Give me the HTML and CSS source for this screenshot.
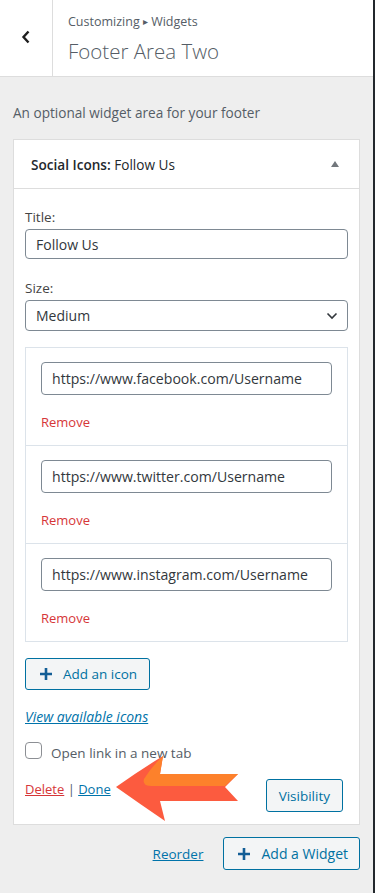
FILE: index.html
```html
<!doctype html>
<html lang="en">
<head>
	<meta charset="UTF-8">
	<title>Footer Area Two</title>
	<link rel="stylesheet" href="styles.css">
</head>
<body>
	<div class="panel">
		<div class="head">
			<button class="back" type="button" aria-label="Back">
				<svg width="10" height="14" viewBox="0 0 10 14"><path d="M7.5 1.5 L2.5 7 L7.5 12.5" fill="none" stroke="#1e1e1e" stroke-width="2.4"/></svg>
			</button>
			<div class="head-title">
				<span class="crumb">Customizing <span class="sep">&#9656;</span> Widgets</span>
				<h2>Footer Area Two</h2>
			</div>
		</div>

		<div class="body">
			<p class="desc">An optional widget area for your footer</p>

			<div class="widget">
				<div class="widget-top">
					<h3><strong>Social Icons:</strong> Follow Us</h3>
					<svg class="toggle" width="10" height="8" viewBox="0 0 10 8"><path d="M5 1 L9 7 L1 7 Z" fill="#72777c"/></svg>
				</div>
				<div class="widget-inside">
					<label class="lbl">Title:</label>
					<div class="field">Follow Us</div>

					<label class="lbl">Size:</label>
					<div class="field select">
						Medium
						<svg width="12" height="8" viewBox="0 0 12 8"><path d="M1.5 1.5 L6 6 L10.5 1.5" fill="none" stroke="#32373c" stroke-width="1.6"/></svg>
					</div>

					<ul class="icons">
						<li class="icon-item">
							<div class="field url">https://www.facebook.com/Username</div>
							<a class="remove" href="#">Remove</a>
						</li>
						<li class="icon-item">
							<div class="field url">https://www.twitter.com/Username</div>
							<a class="remove" href="#">Remove</a>
						</li>
						<li class="icon-item">
							<div class="field url">https://www.instagram.com/Username</div>
							<a class="remove" href="#">Remove</a>
						</li>
					</ul>

					<button class="btn" type="button">
						<svg width="12" height="12" viewBox="0 0 12 12"><path d="M6 0 V12 M0 6 H12" stroke="#135e96" stroke-width="2.6"/></svg>
						Add an icon
					</button>

					<a class="view-icons" href="#">View available icons</a>

					<label class="check">
						<span class="box"></span>
						Open link in a new tab
					</label>

					<div class="widget-control">
						<div class="links">
							<a class="delete" href="#">Delete</a> | <a class="done" href="#">Done</a>
						</div>
						<button class="btn small" type="button">Visibility</button>
					</div>
				</div>
			</div>

			<div class="area-actions">
				<a class="reorder" href="#">Reorder</a>
				<button class="btn" type="button">
					<svg width="12" height="12" viewBox="0 0 12 12"><path d="M6 0 V12 M0 6 H12" stroke="#135e96" stroke-width="2.6"/></svg>
					Add a Widget
				</button>
			</div>
		</div>

		<svg class="arrow" width="135" height="80" viewBox="0 0 135 80">
			<path d="M6 37 Q30 20 53 6 L50 24 L128 24 L115 37 L128 51 L50 51 L55 71 Q30 54 6 37 Z" fill="#fc5b3f"/>
			<path d="M53 6 L50 24 L128 24 L115 36 L42 36 Q32 36 34 29 Q42 16 53 6 Z" fill="#fd812b"/>
		</svg>
	</div>
</body>
</html>
```

FILE: styles.css
```css
body {
	margin: 0;
	padding: 0;
	font-family: "Open Sans", "Noto Sans", sans-serif;
	font-size: 13px;
	color: #555d66;
}
.panel {
	position: relative;
	width: 373px;
	min-height: 893px;
	background: #eeeeee;
	border-right: 2px solid #23282d;
}
.head {
	display: flex;
	height: 76px;
	background: #fff;
	border-bottom: 1px solid #dddddd;
}
.back {
	width: 53px;
	border: 0;
	border-right: 1px solid #dddddd;
	background: #fff;
	display: flex;
	align-items: center;
	justify-content: center;
	padding: 0 0 2px;
}
.head-title {
	padding: 11px 0 0 15px;
}
.crumb {
	display: block;
	line-height: 22px;
	font-size: 12.5px;
}
.crumb .sep {
	font-size: 10px;
	position: relative;
	top: -1px;
}
.head-title h2 {
	margin: 3px 0 0;
	font-size: 20.5px;
	font-weight: 300;
	line-height: 30px;
	color: #555d66;
}
.body {
	padding: 26px 13px 0 13px;
}
.desc {
	margin: 0 0 16px;
	line-height: 20px;
	font-size: 13.6px;
}
.widget {
	background: #fff;
	border: 1px solid #dddddd;
}
.widget-top {
	display: flex;
	align-items: center;
	justify-content: space-between;
	height: 48px;
	padding: 0 19px 0 17px;
	border-bottom: 1px solid #dddddd;
}
.widget-top h3 {
	margin: 0;
	font-size: 13.6px;
	font-weight: 400;
	color: #23282d;
}
.widget-top strong {
	font-weight: 600;
}
.widget-inside {
	padding: 18px 11px 12px;
	display: flex;
	flex-direction: column;
}
.lbl {
	line-height: 20px;
	margin-bottom: 2px;
	color: #444;
	font-size: 13.5px;
}
.field {
	box-sizing: border-box;
	height: 30px;
	border: 1px solid #7e8993;
	border-radius: 4px;
	padding: 0 10px;
	display: flex;
	align-items: center;
	color: #32373c;
	font-size: 14px;
	margin-bottom: 19px;
}
.field.select {
	height: 31px;
	justify-content: space-between;
	padding-right: 9px;
	margin-bottom: 16px;
}
.icons {
	list-style: none;
	margin: 0 0 16px;
	padding: 0;
	border: 1px solid #dce3ea;
}
.icon-item {
	padding: 14px 15px 13px;
	display: flex;
	flex-direction: column;
	align-items: flex-start;
}
.icon-item + .icon-item {
	border-top: 1px solid #dce3ea;
}
.field.url {
	width: 100%;
	height: 33px;
	margin-bottom: 17px;
	font-size: 14.1px;
}
.remove {
	line-height: 20px;
	color: #d63638;
	text-decoration: none;
}
.btn {
	align-self: flex-start;
	box-sizing: border-box;
	display: inline-flex;
	align-items: center;
	gap: 11px;
	height: 32px;
	padding: 0 12px 0 14px;
	border: 1px solid #0071a1;
	border-radius: 3px;
	background: #f3f5f6;
	color: #0071a1;
	font-family: inherit;
	font-size: 13.5px;
}
.view-icons {
	margin-top: 17px;
	align-self: flex-start;
	line-height: 20px;
	color: #0073aa;
	font-style: italic;
	font-size: 14px;
}
.check {
	margin-top: 14px;
	display: flex;
	align-items: flex-start;
	gap: 9px;
	line-height: 24px;
	font-size: 13.5px;
}
.check .box {
	box-sizing: border-box;
	width: 17px;
	height: 17px;
	margin-top: 1px;
	border: 1px solid #8c8f94;
	border-radius: 4px;
	background: #fff;
}
.widget-control {
	display: flex;
	justify-content: space-between;
	align-items: flex-start;
	margin-top: 14px;
	padding-right: 5px;
}
.links {
	line-height: 20px;
	color: #555d66;
}
.links a {
	text-decoration: underline;
}
.delete {
	color: #d63638;
}
.done {
	color: #0073aa;
}
.btn.small {
	height: 33px;
	padding: 0 12px;
	align-self: auto;
}
.area-actions {
	display: flex;
	justify-content: flex-end;
	align-items: center;
	gap: 20px;
	margin-top: 12px;
}
.reorder {
	color: #0073aa;
	font-size: 13.5px;
}
.area-actions .btn {
	height: 33px;
	padding: 0 11px 0 14px;
	font-size: 14px;
}
.arrow {
	position: absolute;
	left: 110px;
	top: 750px;
}
```
